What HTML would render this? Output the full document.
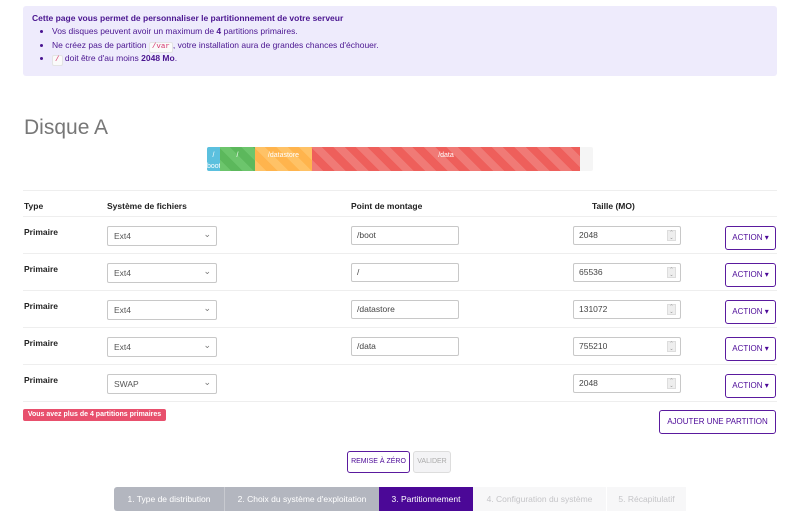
<!DOCTYPE html>
<html><head><meta charset="utf-8"><style>
*{box-sizing:border-box;margin:0;padding:0}
body{width:800px;height:529px;background:#fff;font-family:"Liberation Sans",sans-serif;position:relative;overflow:hidden;color:#222}
.a{position:absolute}
.info{left:23px;top:6px;width:754px;height:70px;background:#eeebfc;border-radius:3px;color:#4a1590;font-size:8.5px;padding:7px 9px}
.info ul{margin-left:20px;margin-top:2px;line-height:13.5px}
.info li{height:13.5px}
code{font-family:"Liberation Mono",monospace;color:#d6336c;background:#fafafa;border:1px solid #e4e4e4;border-radius:2px;padding:0 2px;font-size:7.5px;line-height:9px;display:inline-block}
.line{left:23px;width:754px;height:1px;background:#eee}
.th{font-size:8.5px;font-weight:bold;top:201px}
.pr{left:24px;font-size:8.5px;font-weight:bold}
.sel{left:107px;width:110px;height:20px;border:1px solid #c8c8c8;border-radius:2px;font-size:8.5px;color:#555;padding:0 6px;line-height:18px}
.sel:after{content:"⌄";position:absolute;right:5px;top:-2px;font-size:9px;color:#777}
.in{width:108px;height:19px;border:1px solid #c8c8c8;border-radius:2px;font-size:8.5px;color:#444;padding:0 5px;line-height:17px}
.spin{position:absolute;right:4px;top:3px;width:9px;height:11px;background:#eee;border:1px solid #ddd;font-size:5px;color:#888;text-align:center;line-height:5px}
.act{left:725px;width:51px;height:24px;border:1px solid #5a1a9e;border-radius:3px;color:#4b0897;font-size:8px;text-align:center;line-height:22px}
.st{top:487px;height:24px;font-size:8.5px;line-height:24px;text-align:center}
</style></head><body>
<div class="a info"><b>Cette page vous permet de personnaliser le partitionnement de votre serveur</b>
<ul><li>Vos disques peuvent avoir un maximum de <b>4</b> partitions primaires.</li>
<li>Ne créez pas de partition <code>/var</code>, votre installation aura de grandes chances d'échouer.</li>
<li><code>/</code> doit être d'au moins <b>2048 Mo</b>.</li></ul></div>
<div class="a" style="left:24px;top:116px;font-size:21px;color:#777">Disque A</div>
<div class="a" style="left:207px;top:147px;width:386px;height:24px;background:#f5f5f5;border-radius:2px;overflow:hidden;font-size:7px;color:#fff;text-align:center;line-height:18px">
<div class="a" style="left:0;width:13px;height:24px;background:#5bc0de">/<div style="line-height:8px;margin-top:-2px">boot</div></div>
<div class="a" style="left:13px;width:35px;height:24px;background:repeating-linear-gradient(45deg,#6cc56c 0 8px,#5cb85c 8px 16px)">/</div>
<div class="a" style="left:48px;width:57px;height:24px;background:repeating-linear-gradient(45deg,#ffc266 0 8px,#ffb44d 8px 16px)">/datastore</div>
<div class="a" style="left:105px;width:268px;height:24px;background:repeating-linear-gradient(45deg,#f07a76 0 8px,#ee5f5b 8px 16px)">/data</div>
</div>
<div class="a line" style="top:190px"></div>
<div class="a th" style="left:24px">Type</div>
<div class="a th" style="left:107px">Système de fichiers</div>
<div class="a th" style="left:351px">Point de montage</div>
<div class="a th" style="left:592px">Taille (MO)</div>
<div class="a line" style="top:216px"></div>
<div class="a line" style="top:253px"></div>
<div class="a line" style="top:290px"></div>
<div class="a line" style="top:327px"></div>
<div class="a line" style="top:364px"></div>
<div class="a line" style="top:401px"></div>

<div class="a pr" style="top:227px">Primaire</div><div class="a sel" style="top:226px">Ext4</div><div class="a in" style="left:351px;top:226px">/boot</div><div class="a in" style="left:573px;top:226px">2048<span class="spin">⌃<br>⌄</span></div><div class="a act" style="top:226px">ACTION ▾</div>
<div class="a pr" style="top:264px">Primaire</div><div class="a sel" style="top:263px">Ext4</div><div class="a in" style="left:351px;top:263px">/</div><div class="a in" style="left:573px;top:263px">65536<span class="spin">⌃<br>⌄</span></div><div class="a act" style="top:263px">ACTION ▾</div>
<div class="a pr" style="top:301px">Primaire</div><div class="a sel" style="top:300px">Ext4</div><div class="a in" style="left:351px;top:300px">/datastore</div><div class="a in" style="left:573px;top:300px">131072<span class="spin">⌃<br>⌄</span></div><div class="a act" style="top:300px">ACTION ▾</div>
<div class="a pr" style="top:338px">Primaire</div><div class="a sel" style="top:337px">Ext4</div><div class="a in" style="left:351px;top:337px">/data</div><div class="a in" style="left:573px;top:337px">755210<span class="spin">⌃<br>⌄</span></div><div class="a act" style="top:337px">ACTION ▾</div>
<div class="a pr" style="top:375px">Primaire</div><div class="a sel" style="top:374px">SWAP</div><div class="a in" style="left:573px;top:374px">2048<span class="spin">⌃<br>⌄</span></div><div class="a act" style="top:374px">ACTION ▾</div>

<div class="a" style="left:23px;top:409px;width:143px;height:12px;background:#e8506d;border-radius:2px;color:#fff;font-size:7px;font-weight:bold;line-height:12px;text-align:center">Vous avez plus de 4 partitions primaires</div>
<div class="a" style="left:659px;top:410px;width:117px;height:24px;border:1px solid #5a1a9e;border-radius:3px;color:#4b0897;font-size:8px;line-height:22px;text-align:center">AJOUTER UNE PARTITION</div>
<div class="a" style="left:347px;top:451px;width:63px;height:22px;border:1px solid #5a1a9e;border-radius:3px;color:#4b0897;font-size:7px;line-height:20px;text-align:center">REMISE À ZÉRO</div>
<div class="a" style="left:413px;top:451px;width:38px;height:22px;border:1px solid #ddd;background:#f3f3f5;border-radius:3px;color:#aaa;font-size:7px;line-height:20px;text-align:center">VALIDER</div>
<div class="a st" style="left:114px;width:110px;background:#b3b6bf;color:#fff;border-radius:3px 0 0 3px">1. Type de distribution</div>
<div class="a st" style="left:224px;width:155px;background:#b3b6bf;color:#fff;border-left:1px solid #c8cad0">2. Choix du système d'exploitation</div>
<div class="a st" style="left:379px;width:94px;background:#4b0897;color:#fff">3. Partitionnement</div>
<div class="a st" style="left:473px;width:133px;background:#f7f7f8;color:#c5c5c8">4. Configuration du système</div>
<div class="a st" style="left:606px;width:80px;background:#f7f7f8;color:#c5c5c8;border-left:1px solid #fff">5. Récapitulatif</div>
</body></html>
